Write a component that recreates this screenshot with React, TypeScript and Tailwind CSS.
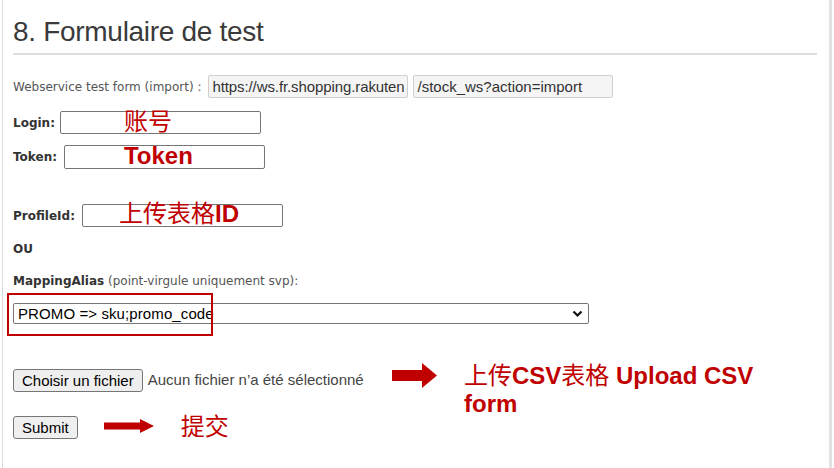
import React from "react";

const RED = "#c00000";

function Arrow({ w, h, shaft, head }: { w: number; h: number; shaft: number; head: number }) {
  const sy = (h - shaft) / 2;
  return (
    <svg width={w} height={h} viewBox={`0 0 ${w} ${h}`}>
      <rect x={0} y={sy} width={w - head + 1} height={shaft} fill={RED} />
      <polygon points={`${w - head},0 ${w},${h / 2} ${w - head},${h}`} fill={RED} />
    </svg>
  );
}

export default function App() {
  const label = "font-['DejaVu_Sans',sans-serif] text-[12px] leading-[16px]";
  const ctrl = "font-['Liberation_Sans',Arial,sans-serif] text-[15px]";
  const red = "font-['Liberation_Sans','Noto_Sans_CJK_SC',sans-serif] text-[24px] leading-[24px] text-[#c00000] whitespace-nowrap";
  return (
    <div className="w-[834px] h-[468px] bg-white overflow-hidden">
      <div className="ml-[2px] w-[830px] h-[468px] border-l border-r-[3px] border-l-[#dcdcdc] border-r-[#e2e2e2] pl-[10px] pr-[12px]">
        <div className="pt-[16px] pb-[5px] border-b-2 border-[#dedede]">
          <h1 className="font-['Liberation_Sans',Arial,sans-serif] text-[28px] leading-[32px] text-[#3a3a3a] font-normal tracking-[-0.3px]">
            8. Formulaire de test
          </h1>
        </div>

        {/* Webservice row */}
        <div className="mt-[20px] flex items-center h-[23px]">
          <span className={`${label} text-[#555]`}>Webservice test form (import) :</span>
          <input
            readOnly
            value="https://ws.fr.shopping.rakuten.fr"
            className={`${ctrl} ml-[7px] w-[200px] h-[23px] px-[3px] bg-[#f5f5f5] border border-[#d0d0d0] rounded-[2px] text-[#333] outline-none tracking-[-0.1px]`}
          />
          <input
            readOnly
            value="/stock_ws?action=import"
            className={`${ctrl} ml-[5px] w-[200px] h-[23px] px-[3px] bg-[#f5f5f5] border border-[#d0d0d0] rounded-[2px] text-[#333] outline-none`}
          />
        </div>

        {/* Login */}
        <div className="mt-[13px] flex items-center h-[23px]">
          <span className={`${label} font-bold text-[#333]`}>Login:</span>
          <div className="relative ml-[5px] w-[201px] h-[23px] border border-[#767676] rounded-[2px] bg-white">
            <span className={`absolute left-[63px] top-[-2px] ${red}`}>账号</span>
          </div>
        </div>

        {/* Token */}
        <div className="mt-[11px] flex items-center h-[24px]">
          <span className={`${label} font-bold text-[#333]`}>Token:</span>
          <div className="relative ml-[7px] w-[201px] h-[24px] border border-[#767676] rounded-[2px] bg-white">
            <span className={`absolute left-[59px] top-[-2px] ${red} font-bold`}>Token</span>
          </div>
        </div>

        {/* ProfileId */}
        <div className="mt-[35px] flex items-center h-[23px]">
          <span className={`${label} font-bold text-[#333]`}>ProfileId:</span>
          <div className="relative ml-[7px] w-[201px] h-[23px] border border-[#767676] rounded-[2px] bg-white">
            <span className={`absolute left-[36px] top-[-3px] ${red}`}>
              上传表格<b>ID</b>
            </span>
          </div>
        </div>

        <div className={`mt-[14px] ${label} font-bold text-[#333]`}>OU</div>

        <div className={`mt-[16px] ${label} text-[#555]`}>
          <b className="text-[#333]">MappingAlias</b> (point-virgule uniquement svp):
        </div>

        {/* Select */}
        <div className="relative mt-[14px] w-[576px] h-[21px]">
          <div className={`${ctrl} flex items-center justify-between w-[576px] h-[21px] border border-[#767676] rounded-[2px] bg-white pl-[4px] pr-[5px] text-black leading-[19px] tracking-[0.1px]`}>
            <span>PROMO =&gt; sku;promo_code</span>
            <svg width="11" height="8" viewBox="0 0 11 8">
              <path d="M1.5 1.5 L5.5 5.5 L9.5 1.5" stroke="#111" strokeWidth="2.2" fill="none" />
            </svg>
          </div>
          <div className="absolute left-[-6px] top-[-10px] w-[206px] h-[43px] border-2 border-[#c00000]" />
        </div>

        {/* File row */}
        <div className="relative mt-[45px] flex items-center h-[23px]">
          <button className={`${ctrl} h-[23px] px-[8px] bg-[#efefef] border border-[#767676] rounded-[3px] text-black leading-[21px]`}>
            Choisir un fichier
          </button>
          <span className={`${ctrl} ml-[5px] text-[#444]`}>Aucun fichier n’a été sélectionné</span>
          <div className="ml-[28px] mt-[-11px]">
            <Arrow w={45} h={25} shaft={11} head={15} />
          </div>
          <div className="absolute left-[451px] top-[-7px] w-[300px] font-['Liberation_Sans','Noto_Sans_CJK_SC',sans-serif] text-[24px] leading-[28px] text-[#c00000]">
            上传<b>CSV</b>表格 <b>Upload CSV form</b>
          </div>
        </div>

        {/* Submit row */}
        <div className="mt-[24px] flex items-center h-[23px]">
          <button className={`${ctrl} h-[23px] px-[8px] bg-[#efefef] border border-[#767676] rounded-[3px] text-black leading-[21px]`}>
            Submit
          </button>
          <div className="ml-[26px] mt-[-4px]">
            <Arrow w={50} h={14} shaft={7} head={14} />
          </div>
          <span className={`ml-[27px] mt-[-2px] ${red}`}>提交</span>
        </div>
      </div>
    </div>
  );
}
